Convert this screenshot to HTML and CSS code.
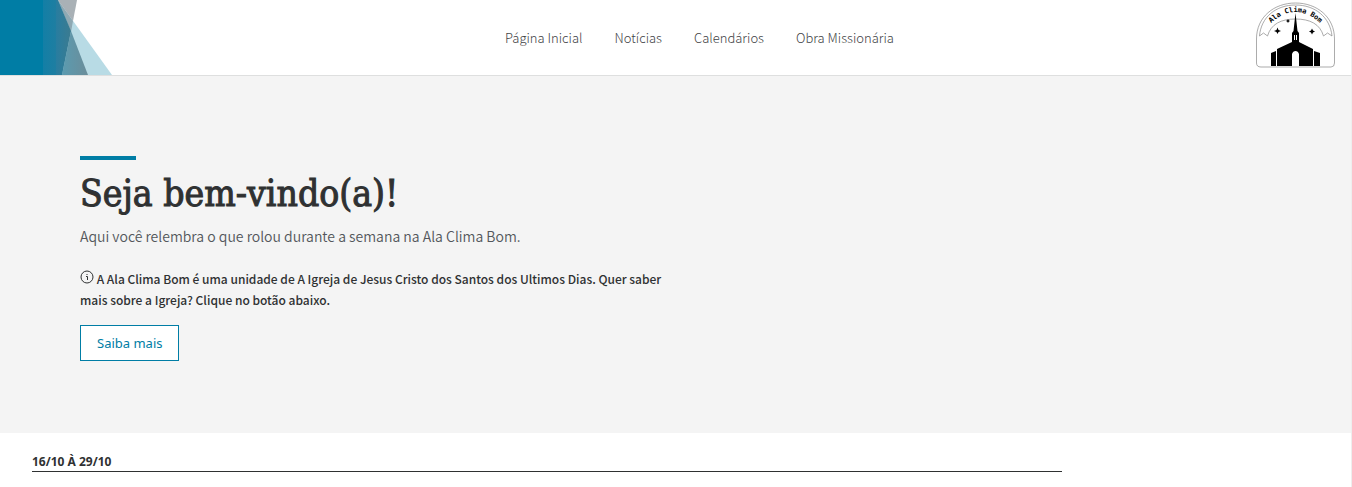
FILE: index.html
```html
<!DOCTYPE html>
<html lang="pt-BR">
<head>
<meta charset="utf-8">
<meta name="viewport" content="width=device-width, initial-scale=1">
<title>Ala Clima Bom</title>
<link rel="stylesheet" href="styles.css">
</head>
<body>
<header class="header">
  <svg class="header-art" viewBox="0 0 112 75" aria-hidden="true">
    <defs>
      <linearGradient id="band"><stop stop-color="#137fa6"/><stop offset="1" stop-color="#1f7ea1"/></linearGradient>
      <linearGradient id="dark"><stop stop-color="#287da0"/><stop offset="1" stop-color="#3c7b90"/></linearGradient>
      <linearGradient id="mist"><stop stop-color="#5b9bb0"/><stop offset="1" stop-color="#6b8d9a"/></linearGradient>
    </defs>
    <path fill="#b8dbe5" d="M58 0 112 75H62Z"/>
    <path fill="#a9b1b6" d="M58 0H77L73 21Z"/>
    <path fill="#8fa9b3" d="M58 0 73 21 71 32Z"/>
    <path fill="url(#mist)" d="M71 31 88 75H62Z"/>
    <path fill="#007da5" d="M0 0H44V75H0Z"/>
    <path fill="url(#band)" d="M43 0H57V75H43Z"/>
    <path fill="url(#dark)" d="M56 0H58L71 31 62 75H56Z"/>
  </svg>
  <nav class="nav">
    <a href="#inicio">Página Inicial</a>
    <a href="#noticias">Notícias</a>
    <a href="#calendarios">Calendários</a>
    <a href="#obra">Obra Missionária</a>
  </nav>
  <svg class="logo" viewBox="-1 0 80 68" role="img" aria-label="Ala Clima Bom">
    <g fill="none" stroke="#888" stroke-width=".7">
      <path d="M.5 39C.5 17 18 3 39.500 3S78.500 17 78.500 39V63Q78.500 67 75 67H5Q.5 67 .5 63Z"/>
      <path d="M3.500 36C5 17 20 5 39.500 5S74 17 76 36L71.500 33 67.500 36C64 24 54 19 39.500 19S15 24 11.500 36L7.500 33Z"/>
    </g>
    <path id="arc" fill="none" d="M15 23Q39.500 1 64 23"/>
    <text class="logo-text"><textPath href="#arc" startOffset="50%" text-anchor="middle">Ala Clima Bom</textPath></text>
    <path d="M39.500 13 41.500 31 43 33V42L57 49V66H43V54Q42 51 39.500 51T36 54V66H21V49L36 42V33L37.500 31ZM15 53 20 51V66H15ZM58 51 64 53V66H58Z"/>
    <path fill="#fff" d="M38 35H39V40H38ZM40 35H41V40H40Z"/>
    <path d="M21.500 27.500 22.500 30 25 31 22.500 32 21.500 34 20.500 32 18 31 20.500 30ZM56 28.500 57 30.500 59 31.500 57 32.500 56 34.500 55 32.500 53 31.500 55 30.500ZM32 19 32.700 20.300 34 21 32.700 21.700 32 23 31.300 21.700 30 21 31.300 20.300Z"/>
  </svg>
</header>
<main>
  <section class="hero">
    <div class="accent"></div>
    <h1>Seja bem-vindo(a)!</h1>
    <p class="lead">Aqui você relembra o que rolou durante a semana na Ala Clima Bom.</p>
    <p class="about"><svg class="info" viewBox="0 0 14 14" aria-hidden="true"><circle cx="7" cy="7" r="6"/><path d="M6 6.500H7.500V10M7 4V5"/></svg> A Ala Clima Bom é uma unidade de A Igreja de Jesus Cristo dos Santos dos Ultimos Dias. Quer saber mais sobre a Igreja? Clique no botão abaixo.</p>
    <a class="button" href="#saiba-mais">Saiba mais</a>
  </section>
  <section class="week">
    <h2>16/10 À 29/10</h2>
  </section>
</main>
</body>
</html>
```
FILE: styles.css
```css
* {
  box-sizing: border-box;
}

body {
  margin: 0;
  min-height: 100vh;
  border-right: 1px solid #eee;
  background: #fff;
  color: #2f3132;
  font-family: "Source Sans Pro", "Noto Sans CJK JP", "Noto Sans", sans-serif;
}

.header {
  display: flex;
  justify-content: space-between;
  align-items: flex-start;
  padding-right: 16px;
  border-bottom: 1px solid #dedfdf;
}

.header-art {
  width: 112px;
  height: 75px;
}

.nav {
  display: flex;
  align-self: center;
  gap: 32px;
  padding-left: 32px;
}

.nav a {
  color: #3f4346;
  font-size: 13px;
  font-weight: 300;
  line-height: 20px;
  text-decoration: none;
}

.logo {
  width: 80px;
  height: 68px;
}

.logo-text {
  font: bold 7px "DejaVu Sans Mono", monospace;
}

.hero {
  padding: 80px 80px 72px;
  background: #f4f4f4;
}

.accent {
  width: 56px;
  height: 4px;
  background: #007da5;
}

h1 {
  margin: 9px 0 5px;
  font-family: "Roboto Slab", "DejaVu Serif Condensed", "DejaVu Serif", serif;
  font-size: 37px;
  font-weight: 400;
  line-height: 50px;
  -webkit-text-stroke: 1px #2f3132;
}

.lead {
  margin: 0 0 20px;
  color: #53575b;
  font-size: 14px;
  font-weight: 350;
  line-height: 24px;
}

.about {
  max-width: 600px;
  margin: 0 0 15px;
  font-size: 12px;
  font-weight: 500;
  line-height: 21px;
}

.info {
  width: 14px;
  height: 14px;
  fill: none;
  stroke: #2f3132;
}

.button {
  display: inline-block;
  padding: 7px 16px;
  border: 1px solid #007da5;
  background: #fff;
  color: #007da5;
  font-family: "Noto Sans", sans-serif;
  font-size: 13px;
  line-height: 20px;
  text-decoration: none;
}

.week {
  max-width: 1094px;
  padding: 20px 32px 0;
}

h2 {
  margin: 0;
  border-bottom: 1px solid #2f3132;
  font-family: "Noto Sans", sans-serif;
  font-size: 12px;
  font-weight: 700;
  line-height: 18px;
}
```
